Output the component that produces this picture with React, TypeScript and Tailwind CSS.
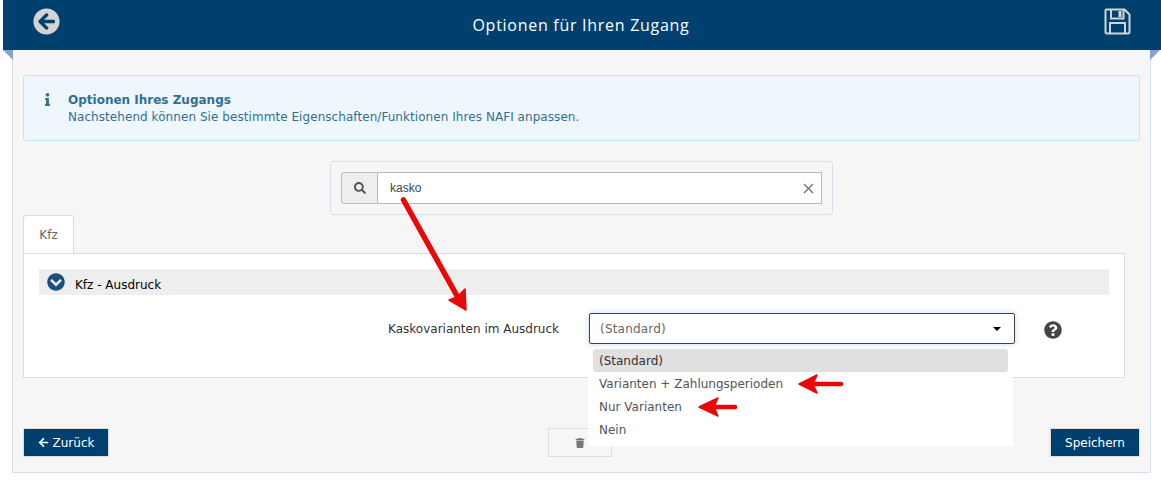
import React from "react";
import { FaArrowCircleLeft, FaInfo, FaSearch, FaChevronCircleDown, FaArrowLeft, FaTrash, FaQuestionCircle } from "react-icons/fa";
import { X } from "lucide-react";

function RedArrow({ x, y, w, h, d, head, sw }: { x: number; y: number; w: number; h: number; d: string; head: string; sw: number }) {
  return (
    <svg className="absolute" style={{ left: x, top: y }} width={w} height={h} viewBox={`0 0 ${w} ${h}`} fill="none">
      <path d={d} stroke="#e80808" strokeWidth={sw} strokeLinecap="round" />
      <path d={head} fill="#e80808" stroke="#e80808" strokeWidth="1.5" strokeLinejoin="round" />
    </svg>
  );
}

function FloppyIcon() {
  return (
    <svg className="absolute left-[1101px] top-[8px]" width="27" height="27" viewBox="0 0 27 27" fill="none">
      <path
        d="M2.5 1.5 H20.5 L25.5 6.5 V24 a1.5 1.5 0 0 1 -1.5 1.5 H3 a1.5 1.5 0 0 1 -1.5 -1.5 V2.5 a1 1 0 0 1 1 -1 Z"
        stroke="#d4d4d4"
        strokeWidth="2"
        strokeLinejoin="round"
      />
      <path d="M7 2 V10.5 H19.5 V2" stroke="#d4d4d4" strokeWidth="2" />
      <rect x="14.5" y="3" width="3" height="6" fill="#d4d4d4" />
      <path d="M6 25 V15 H21 V25" stroke="#d4d4d4" strokeWidth="2" />
    </svg>
  );
}

export default function App() {
  return (
    <div className="relative h-[481px] w-[1161px] overflow-hidden bg-white font-['DejaVu_Sans',sans-serif] text-[12px] text-[#555]">
      <div className="ml-[12px] flex h-[473px] w-[1139px] flex-col border-x border-b border-[#d5e0ee] bg-[#f6f6f6]">
        <div className="relative -ml-[10px] flex h-[50px] w-[1158px] shrink-0 items-center justify-center bg-[#00406f]">
          <FaArrowCircleLeft className="absolute left-[30px] top-[8px] text-[#d4d4d4]" size={27} />
          <span className="-ml-[2px] font-['Open_Sans',sans-serif] text-[16px] tracking-[0.72px] text-white">Optionen für Ihren Zugang</span>
          <FloppyIcon />
        </div>

        <div className="ml-[10px] mr-[10px] mt-[25px] flex h-[66px] items-start rounded-[3px] border border-[#bce8f1] bg-[#eef7fe] pl-[17px] pt-[15px] text-[#31708f]">
          <FaInfo className="mt-[2px] shrink-0" size={13} />
          <div className="ml-[14px] pt-[1px] leading-[16.5px]">
            <div className="font-bold">Optionen Ihres Zugangs</div>
            <div className="tracking-[0.06px]">Nachstehend können Sie bestimmte Eigenschaften/Funktionen Ihres NAFI anpassen.</div>
          </div>
        </div>

        <div className="ml-[317px] mt-[20px] h-[54px] w-[503px] rounded-[3px] border border-[#d5e0ee] px-[10px] pt-[10px]">
          <div className="flex h-[32px]">
            <div className="flex w-[37px] items-center justify-center rounded-l-[3px] border border-[#bbb] bg-[#eee] text-[#555]">
              <FaSearch size={12} />
            </div>
            <div className="flex flex-1 items-center justify-between border border-l-0 border-[#bbb] bg-white pl-[12px] pr-[4px] font-['Liberation_Sans',sans-serif] text-[12px] text-[#444]">
              <span className="-mt-[1px]">kasko</span>
              <X size={17} strokeWidth={1.6} className="mt-[1px] text-[#666]" />
            </div>
          </div>
        </div>

        <div className="ml-[10px] flex h-[38px] w-[51px] items-center justify-center rounded-t-[3px] border border-b-0 border-[#ddd] bg-white text-[#666]">Kfz</div>
        <div className="ml-[10px] h-[125px] w-[1102px] border border-[#ddd] bg-white px-[15px] pt-[15px]">
          <div className="flex h-[26px] items-center bg-[#eee] pl-[8px] text-black">
            <FaChevronCircleDown className="text-[#1b4f7c]" size={18} />
            <span className="ml-[10px] mt-[6px]">Kfz - Ausdruck</span>
          </div>
          <div className="mt-[18px] flex items-start">
            <div className="w-[520px] pt-[7px] text-right text-[#333]">Kaskovarianten im Ausdruck</div>
            <div className="ml-[30px] flex h-[31px] w-[426px] items-center justify-between rounded-[2px] border border-[#444] bg-white pl-[10px] pr-[13px] text-[#666] shadow-[0_0_6px_rgba(100,160,230,0.4)]">
              <span className="tracking-[0.2px]">(Standard)</span>
              <span className="h-0 w-0 border-x-[4px] border-t-[4px] border-x-transparent border-t-black" />
            </div>
            <FaQuestionCircle className="ml-[29px] mt-[8px] text-[#444]" size={18} />
          </div>
        </div>

        <div className="ml-[10px] mr-[10px] mt-[50px] flex items-start justify-between">
          <div className="flex h-[29px] w-[86px] items-center justify-center gap-[4px] border border-[#ddd] bg-[#00406f] text-white">
            <FaArrowLeft size={11} />
            <span>Zurück</span>
          </div>
          <div className="flex h-[29px] w-[64px] items-center justify-center border border-[#ddd] text-[#777]">
            <FaTrash size={10} />
          </div>
          <div className="flex h-[29px] w-[90px] items-center justify-center border border-[#ddd] bg-[#00406f] text-white">Speichern</div>
        </div>
      </div>

      <span className="absolute left-[3px] top-[50px] h-0 w-0 border-l-[10px] border-t-[10px] border-l-transparent border-t-[#8c9ecb]" />
      <span className="absolute left-[1150px] top-[50px] h-0 w-0 border-r-[10px] border-t-[10px] border-r-transparent border-t-[#8c9ecb]" />

      <div className="absolute left-[588px] top-[349px] h-[97px] w-[425px] bg-white px-[5px] text-[#555]">
        <div className="flex h-[23px] items-center rounded-[3px] bg-[#e0e0e0] px-[6px] text-[#333]">(Standard)</div>
        <div className="flex h-[23px] items-center px-[6px]">Varianten + Zahlungsperioden</div>
        <div className="flex h-[23px] items-center px-[6px]">Nur Varianten</div>
        <div className="flex h-[23px] items-center px-[6px]">Nein</div>
      </div>

      <RedArrow x={395} y={192} w={80} h={124} sw={5.5} d="M8.5 8 L66 111" head="M71 118 L54 108 L62 105 L70 97 Z" />
      <RedArrow x={795} y={372} w={54} h={24} sw={4.5} d="M14 12 L46 12" head="M4 12 L22 3 L18 12 L22 21 Z" />
      <RedArrow x={695} y={395} w={46} h={24} sw={4.5} d="M14 12 L40 12" head="M4 12 L23 3 L19 12 L23 21 Z" />
    </div>
  );
}
